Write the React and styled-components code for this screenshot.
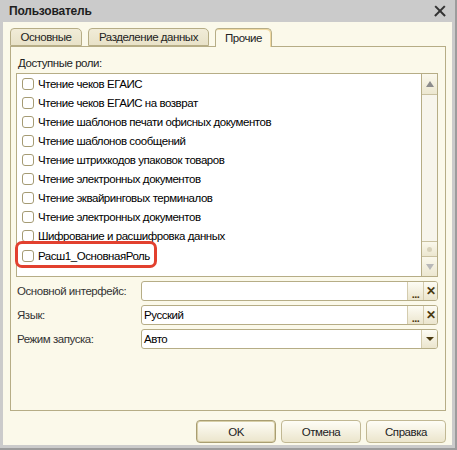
import React from "react";
import styled, { createGlobalStyle } from "styled-components";

const Global = createGlobalStyle`
  html, body { margin: 0; padding: 0; background: #ffffff; }
  body { font-family: "Liberation Sans", Arial, sans-serif; font-size: 11.5px; letter-spacing: -0.45px; color: #111; }
`;

const Window = styled.div`
  width: 457px;
  height: 450px;
  box-sizing: border-box;
  background: #cbcbcb;
  border-right: 2px solid #9c9c9c;
  border-bottom: 2px solid #9c9c9c;
  padding: 0 3px 3px 3px;
  display: flex;
  flex-direction: column;
`;

const TitleBar = styled.div`
  height: 22px;
  display: flex;
  align-items: center;
  justify-content: space-between;
  padding: 0 6px 0 6px;
  flex: none;
`;

const Title = styled.div`
  font-weight: bold;
  font-size: 12px;
  letter-spacing: -0.2px;
  color: #1e1e1e;
`;

const Close = styled.div`
  width: 12px;
  height: 12px;
  position: relative;
  &::before, &::after {
    content: "";
    position: absolute;
    left: -1px;
    top: 5px;
    width: 14px;
    height: 2.4px;
    background: #333;
  }
  &::before { transform: rotate(45deg); }
  &::after { transform: rotate(-45deg); }
`;

const Content = styled.div`
  flex: 1;
  background: #fbf9ea;
  display: flex;
  flex-direction: column;
  padding: 6px 6px 0 7px;
`;

const TabRow = styled.div`
  display: flex;
  gap: 6px;
  height: 18px;
  position: relative;
  z-index: 1;
  flex: none;
`;

const Tab = styled.div`
  box-sizing: border-box;
  width: ${(p) => p.$w}px;
  height: ${(p) => (p.$active ? 19 : 18)}px;
  border: 1px solid #b6ad86;
  border-bottom: ${(p) => (p.$active ? "none" : "1px solid #b6ad86")};
  border-radius: 4px 5px 0 0;
  background: ${(p) => (p.$active ? "#fbf9ea" : "linear-gradient(#f1ecd8, #e8e2c8)")};
  box-shadow: ${(p) => (p.$active ? "inset -1px 1px 0 #f0d9a0" : "none")};
  display: flex;
  align-items: center;
  justify-content: center;
  color: #222;
`;

const Panel = styled.div`
  box-sizing: border-box;
  height: 365px;
  flex: none;
  border: 1px solid #b6ad86;
  padding: 9px 7px 0 5px;
  display: flex;
  flex-direction: column;
`;

const Caption = styled.div`
  height: 17px;
  line-height: 15px;
  padding-left: 2px;
  color: #222;
`;

const ListBox = styled.div`
  box-sizing: border-box;
  height: 204px;
  border: 1px solid #b6ad86;
  background: #fff;
  display: flex;
`;

const Rows = styled.div`
  flex: 1;
  display: flex;
  flex-direction: column;
  align-items: flex-start;
`;

const Row = styled.div`
  box-sizing: border-box;
  height: 19px;
  display: flex;
  align-items: center;
  gap: 4px;
  padding-left: 5px;
  white-space: nowrap;
  position: relative;
  color: #000;
  ${(p) =>
    p.$marked &&
    `
    margin-top: 1px;
    &::after {
      content: "";
      position: absolute;
      left: -2px;
      right: -7px;
      top: -5px;
      bottom: -3px;
      border: 3px solid #e2402f;
      border-radius: 7px;
    }
  `}
`;

const Check = styled.span`
  box-sizing: border-box;
  width: 12px;
  height: 12px;
  border: 1px solid #a59b74;
  border-radius: 3px;
  background: #fff;
  flex: none;
`;

const ScrollBar = styled.div`
  width: 16px;
  box-sizing: border-box;
  border-left: 1px solid #b6ad86;
  background: #f7f5ec;
  display: flex;
  flex-direction: column;
`;

const ScrollBtn = styled.div`
  height: ${(p) => p.$h}px;
  box-sizing: border-box;
  background: linear-gradient(#faf8ec, #ece7d0);
  border-top: ${(p) => (p.$top ? "1px solid #c9c1a0" : "none")};
  border-bottom: ${(p) => (p.$bottom ? "1px solid #c9c1a0" : "none")};
  display: flex;
  align-items: center;
  justify-content: center;
`;

const Spacer = styled.div`
  flex: 1;
`;

const Arrow = styled.span`
  width: 0;
  height: 0;
  border-left: 4px solid transparent;
  border-right: 4px solid transparent;
  ${(p) =>
    p.$down
      ? `border-top: ${p.$s || 6}px solid ${p.$c || "#8c8c8c"};`
      : `border-bottom: ${p.$s || 6}px solid ${p.$c || "#8c8c8c"};`}
`;

const Dot = styled.span`
  width: 5px;
  height: 5px;
  border-radius: 50%;
  background: #d8d2ba;
`;

const Form = styled.div`
  display: flex;
  flex-direction: column;
  gap: 4px;
  margin-top: 4px;
`;

const FormRow = styled.div`
  display: flex;
  align-items: center;
  height: 20px;
`;

const Label = styled.div`
  width: 124px;
  padding-left: 1px;
  flex: none;
  color: #333;
`;

const Field = styled.div`
  box-sizing: border-box;
  flex: 1;
  height: 20px;
  border: 1px solid #b6ad86;
  border-radius: 3px;
  background: #fff;
  display: flex;
  overflow: hidden;
`;

const Value = styled.div`
  flex: 1;
  display: flex;
  align-items: center;
  padding-left: 2px;
  color: #000;
`;

const FieldBtn = styled.div`
  width: ${(p) => p.$w || 15}px;
  box-sizing: border-box;
  border-left: 1px solid #d4ccae;
  background: linear-gradient(#fdfcf4, #ebe5cd);
  display: flex;
  align-items: center;
  justify-content: center;
  color: #4a3a10;
  font-weight: bold;
  font-size: 12px;
  letter-spacing: 0;
  line-height: 1;
`;

const Dots = styled.span`
  font-size: 11px;
  letter-spacing: -0.5px;
  transform: translateY(3px);
`;

const Footer = styled.div`
  display: flex;
  justify-content: flex-end;
  gap: 5px;
  padding: 9px 0 0 0;
`;

const Button = styled.div`
  box-sizing: border-box;
  width: 80px;
  height: 23px;
  border: 1px solid ${(p) => (p.$def ? "#a99e72" : "#c1b893")};
  border-radius: 4px;
  background: linear-gradient(#fefdf6, #ebe5cc);
  box-shadow: ${(p) => (p.$def ? "inset 0 0 0 1px #d8cfa8" : "none")};
  display: flex;
  align-items: center;
  justify-content: center;
  color: #222;
`;

const roles = [
  "Чтение чеков ЕГАИС",
  "Чтение чеков ЕГАИС на возврат",
  "Чтение шаблонов печати офисных документов",
  "Чтение шаблонов сообщений",
  "Чтение штрихкодов упаковок товаров",
  "Чтение электронных документов",
  "Чтение эквайринговых терминалов",
  "Чтение электронных документов",
  "Шифрование и расшифровка данных",
];

export default function App() {
  return (
    <>
      <Global />
      <Window>
        <TitleBar>
          <Title>Пользователь</Title>
          <Close />
        </TitleBar>
        <Content>
          <TabRow>
            <Tab $w={72}>Основные</Tab>
            <Tab $w={121}>Разделение данных</Tab>
            <Tab $w={57} $active>
              Прочие
            </Tab>
          </TabRow>
          <Panel>
            <Caption>Доступные роли:</Caption>
            <ListBox>
              <Rows>
                {roles.map((r, i) => (
                  <Row key={i}>
                    <Check />
                    {r}
                  </Row>
                ))}
                <Row $marked>
                  <Check />
                  Расш1_ОсновнаяРоль
                </Row>
              </Rows>
              <ScrollBar>
                <ScrollBtn $h={21} $bottom>
                  <Arrow />
                </ScrollBtn>
                <Spacer />
                <ScrollBtn $h={15} $top>
                  <Dot />
                </ScrollBtn>
                <ScrollBtn $h={20} $top>
                  <Arrow $down $c="#b8b8b8" />
                </ScrollBtn>
              </ScrollBar>
            </ListBox>
            <Form>
              <FormRow>
                <Label>Основной интерфейс:</Label>
                <Field>
                  <Value />
                  <FieldBtn $w={16}>
                    <Dots>...</Dots>
                  </FieldBtn>
                  <FieldBtn $w={14}>✕</FieldBtn>
                </Field>
              </FormRow>
              <FormRow>
                <Label>Язык:</Label>
                <Field>
                  <Value>Русский</Value>
                  <FieldBtn $w={16}>
                    <Dots>...</Dots>
                  </FieldBtn>
                  <FieldBtn $w={14}>✕</FieldBtn>
                </Field>
              </FormRow>
              <FormRow>
                <Label>Режим запуска:</Label>
                <Field>
                  <Value>Авто</Value>
                  <FieldBtn $w={16}>
                    <Arrow $down $s={4} $c="#4a3a10" />
                  </FieldBtn>
                </Field>
              </FormRow>
            </Form>
          </Panel>
          <Footer>
            <Button $def>OK</Button>
            <Button>Отмена</Button>
            <Button>Справка</Button>
          </Footer>
        </Content>
      </Window>
    </>
  );
}
